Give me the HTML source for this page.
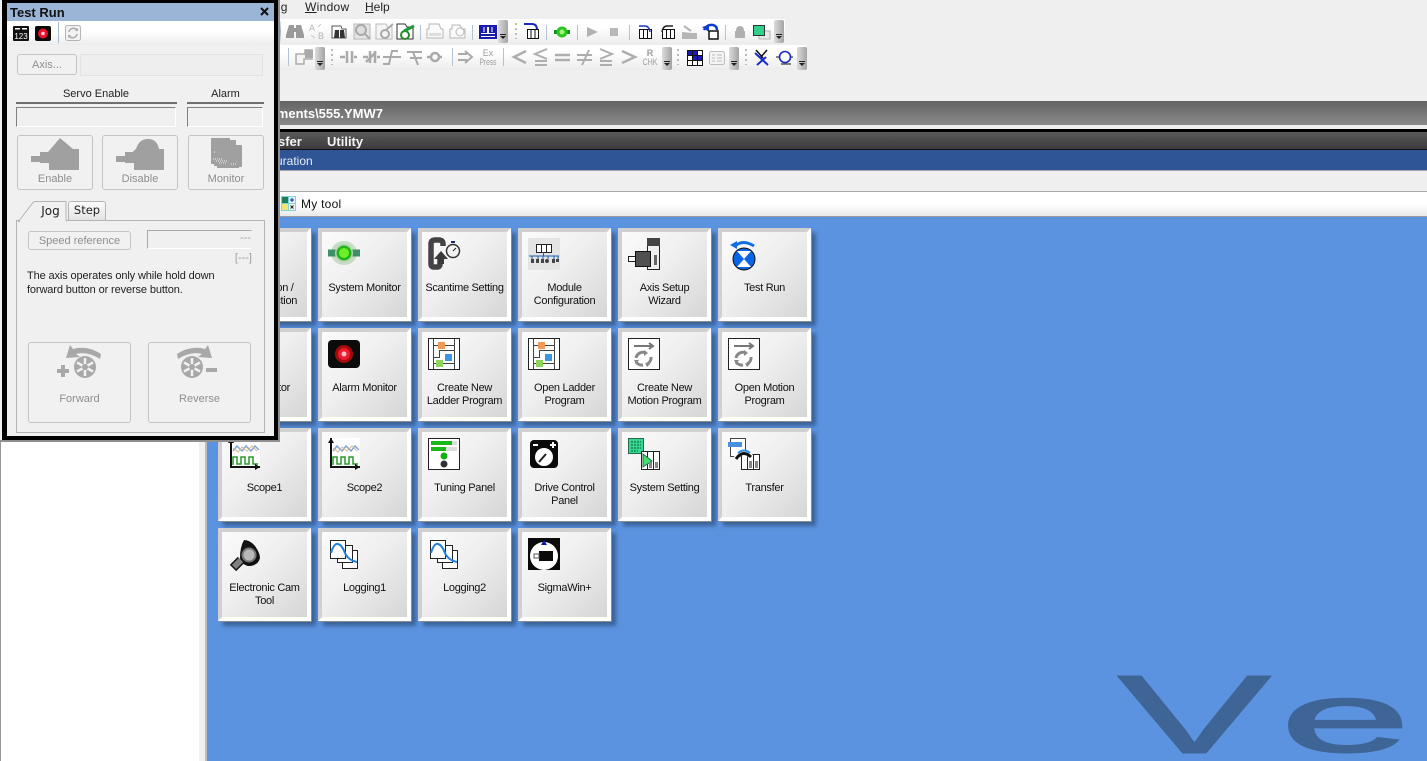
<!DOCTYPE html>
<html><head><meta charset="utf-8"><style>
html,body{margin:0;padding:0;width:1427px;height:761px;overflow:hidden;background:#efefef;font-family:"Liberation Sans",sans-serif;}
.a{position:absolute;}
svg{position:absolute;overflow:visible;}
.t{position:absolute;width:93px;height:93px;box-sizing:border-box;border:4px solid;border-color:#d0d0d0 #fff #fff #d0d0d0;background:linear-gradient(135deg,#fbfbfb 0%,#efefef 45%,#d6d6d6 100%);box-shadow:1px 1px 0 #8a8a8a,5px 5px 4px #3a6298;}
.t svg{left:6px;top:6px;}
.t div{position:absolute;left:-4px;width:93px;top:50px;text-align:center;font-size:11px;letter-spacing:-.3px;line-height:13px;color:#111;}
.m{position:absolute;font-size:12px;color:#222;top:0;line-height:14px;}
.b{position:absolute;box-sizing:border-box;border:1px solid #c4c4c4;border-radius:3px;background:#f1f1f1;color:#8e8e8e;text-align:center;font-size:11px;}
.s{position:absolute;width:1px;background:linear-gradient(#dfe7ee,#9db4c8,#dfe7ee);}
.dd{position:absolute;width:10px;height:23px;background:linear-gradient(90deg,#dcdcdc,#a3a3a3);border-radius:2px;}
.dd:after{content:"";position:absolute;left:2px;top:14px;width:6px;height:1px;background:#222;}
.dd:before{content:"";position:absolute;left:2px;top:16px;border:3px solid transparent;border-top:3px solid #222;}
.dots{position:absolute;width:2px;height:16px;background:repeating-linear-gradient(#bbb 0 2px,transparent 2px 5px);}
</style></head><body>

<!-- menu -->
<div class="m" style="left:252px">Debug</div>
<div class="m" style="left:305px;letter-spacing:.3px"><u>W</u>indow</div>
<div class="m" style="left:365px"><u>H</u>elp</div>

<!-- toolbars -->
<div class="a" style="left:278px;top:19px;width:507px;height:25px;background:linear-gradient(#fff,#fff 30%,#ececec)"></div>
<div class="a" style="left:278px;top:45px;width:528px;height:25px;background:linear-gradient(#fff,#fff 30%,#ececec)"></div>

<div class="s" style="left:280px;top:21px;height:21px"></div>
<svg style="left:278px;top:19px" width="507" height="25" viewBox="0 0 507 25">
<path d="M11 6h5v3h2V6h5l3 10v3h-8v-6h-2v6H8v-3z" fill="#9a9a9a"/>
<text x="31" y="12" font-size="9" fill="#b5b5b5" font-family="Liberation Sans">A</text>
<text x="40" y="20" font-size="9" fill="#b5b5b5" font-family="Liberation Sans">B</text>
<path d="M33 16l4 3M43 5l-3 3" stroke="#c5c5c5" fill="none"/>
<path d="M54 7h9l1 3h4v9H54z" fill="#fff" stroke="#555"/>
<path d="M57 11h4v8h-5zM62 11h4l1 8h-5z" fill="#333"/>
<rect x="76" y="5" width="16" height="15" fill="#e6e6e6" stroke="#b8b8b8"/><circle cx="83" cy="11" r="5" fill="#ddd" stroke="#aaa" stroke-width="2"/><path d="M87 15l5 5" stroke="#aaa" stroke-width="2"/>
<path d="M98 5h10l2 3h4v12H98z" fill="#f4f4f4" stroke="#bbb"/><circle cx="107" cy="15" r="4" fill="none" stroke="#aaa" stroke-width="2"/><path d="M108 11l7-6" stroke="#aaa" stroke-width="2"/>
<path d="M119 5h8l2 3h6v12h-16z" fill="#fff" stroke="#333"/><circle cx="127" cy="16" r="4" fill="none" stroke="#2a8a2a" stroke-width="2"/><path d="M126 12l10-5" stroke="#1d9a3d" stroke-width="3"/>
<rect x="142" y="6" width="1" height="15" fill="#b2c4d4"/>
<path d="M151 5h10l2 5h2v9h-16v-9h2z" fill="#fafafa" stroke="#b7b7b7"/><rect x="151" y="14" width="12" height="3" fill="#ddd"/>
<path d="M174 6h8l2 4h3v9h-15v-9h2z" fill="#fafafa" stroke="#b7b7b7"/><circle cx="182" cy="13" r="4" fill="none" stroke="#bbb"/>
<rect x="194" y="6" width="1" height="15" fill="#b2c4d4"/>
<rect x="202" y="7" width="16" height="12" fill="#fff" stroke="#1a1aa8" stroke-width="2"/><rect x="203" y="7" width="6" height="7" fill="#1a1ab5"/><rect x="211" y="7" width="6" height="7" fill="#1a1ab5"/><path d="M206 8v5M214 8v5" stroke="#fff"/><path d="M202 16h16" stroke="#1a1aa8" stroke-width="2"/>
<path d="M246 5h8q5 0 5 6" fill="none" stroke="#1a2ac0" stroke-width="2"/>
<path d="M249.500 10.500h11v9h-11zM253 10.500v9M257 10.500v9" fill="#fff" stroke="#111"/>
<rect x="268" y="6" width="1" height="15" fill="#b2c4d4"/>
<rect x="276" y="11" width="16" height="4" fill="#0f8f20"/><circle cx="284" cy="13" r="5.500" fill="#26c81e"/><circle cx="284" cy="13" r="2.500" fill="#a8ef7e"/>
<rect x="299" y="6" width="1" height="15" fill="#b2c4d4"/>
<path d="M309 8l11 5-11 5z" fill="#b2b2b2"/>
<rect x="332" y="9" width="8" height="8" fill="#b8b8b8"/>
<rect x="351" y="6" width="1" height="15" fill="#b2c4d4"/>
<path d="M361.500 10.500h12v9h-12zM365.500 10.500v9M369.500 10.500v9" fill="#fff" stroke="#111"/><path d="M361 7h6q4 0 5 6" fill="none" stroke="#1a3ac0" stroke-width="1.500"/>
<path d="M384.500 10.500h12v9h-12zM388.500 10.500v9M392.500 10.500v9" fill="#fff" stroke="#111"/><path d="M395 7h-6q-4 0-5 6" fill="none" stroke="#222" stroke-width="1.500"/>
<path d="M404 13l10 1h5v6h-15z" fill="#b5b5b5"/><path d="M406 7l7 5" stroke="#b5b5b5" stroke-width="2"/>
<path d="M426 11q3-6 9-5 4 1 4 5" fill="none" stroke="#0a3ad0" stroke-width="2.500"/><path d="M424 8l7-2v7z" fill="#0a3ad0"/>
<path d="M431 12h9v8h-9z" fill="#fff" stroke="#111" stroke-width="1.500"/>
<rect x="447" y="6" width="1" height="15" fill="#b2c4d4"/>
<path d="M458 12q0-5 4-5t4 5h1v7h-10v-7z" fill="#b0b0b0"/>
<path d="M481 12h11v8h-11z" fill="#e8e8e8" stroke="#b5b5b5"/><rect x="475.500" y="6.500" width="11" height="10" fill="#2fd08a" stroke="#333"/>
</svg>
<div class="dd" style="left:498px;top:20px"></div>
<div class="dots" style="left:515px;top:23px"></div>
<div class="dd" style="left:774px;top:20px"></div>

<svg style="left:278px;top:45px" width="528" height="25" viewBox="0 0 528 25" fill="none">
<rect x="10" y="3" width="1" height="18" fill="#b2c4d4"/>
<path d="M18 9h9V5h7v9h-8v5H18z" stroke="#ababab" stroke-width="1.500" fill="#f4f4f4"/><rect x="27" y="5" width="8" height="8" fill="#aaa"/>
<g stroke="#aaa" stroke-width="3">
<path d="M62 12h5M69 6v12M74 6v12M76 12h3" stroke-width="2.500"/>
<path d="M85 12h5M92 6v12M97 6v12M99 12h3M88 17l10-10" stroke-width="2.500"/>
<path d="M105 12h18M105 19h6l3-13h6" stroke-width="2"/>
<path d="M129 7h15M132 13h12M135 7l5 13" stroke-width="2"/>
<circle cx="157" cy="12" r="4" stroke-width="2.500"/><path d="M149 12h4M161 12h3" stroke-width="2.500"/>
<path d="M180 9h9M180 15h9M187 6l7 6-7 6" stroke-width="2"/>
</g>
<rect x="174" y="3" width="1" height="18" fill="#b2c4d4"/>
<text x="210" y="11" text-anchor="middle" font-size="9" fill="#9c9c9c" font-family="Liberation Sans">Ex</text>
<text x="210" y="20" text-anchor="middle" font-size="9" fill="#9c9c9c" font-family="Liberation Sans" textLength="17" lengthAdjust="spacingAndGlyphs">Press</text>
<rect x="225" y="3" width="1" height="18" fill="#b2c4d4"/>
<g stroke="#aeaeae" stroke-width="2.500">
<path d="M248 6l-12 6 12 6"/>
<path d="M269 4l-12 5 12 5M257 16h12M257 20h12" stroke-width="2"/>
<path d="M277 10h15M277 15h15"/>
<path d="M299 10h15M299 15h15M311 5l-7 15" stroke-width="2"/>
<path d="M322 4l12 5-12 5M322 16h12M322 20h12" stroke-width="2"/>
<path d="M344 6l13 6-13 6"/>
</g>
<text x="372" y="11" text-anchor="middle" font-size="9" font-weight="bold" fill="#9c9c9c" font-family="Liberation Sans">R</text>
<text x="372" y="20" text-anchor="middle" font-size="9" fill="#9c9c9c" font-family="Liberation Sans" textLength="15" lengthAdjust="spacingAndGlyphs">CHK</text>
<rect x="409.500" y="5.500" width="15" height="15" fill="#fff"/>
<rect x="409" y="5" width="10" height="5" fill="#1a1ab5"/><rect x="414" y="10" width="10" height="5" fill="#1a1ab5"/>
<path d="M409.500 5.500h15v15h-15zM409.500 10.500h15M409.500 15.500h15M414.500 5.500v15M419.500 5.500v15" stroke="#111"/>
<rect x="431.500" y="6.500" width="15" height="13" rx="2" fill="#f4f4f4" stroke="#bcbcbc"/>
<path d="M434 10h3M439 10h5M434 13h3M439 13h5M434 16h3M439 16h5" stroke="#bcbcbc"/>
<path d="M478 5l7 8M489 5l-7 8" stroke="#111" stroke-width="1.500"/>
<path d="M477 8l13 12M479 20l9-8" stroke="#1a2ad0" stroke-width="2"/>
<path d="M498 12h4M512 12h3M503 19h10" stroke="#111"/>
<circle cx="507" cy="12" r="5.500" stroke="#1a2ac0" stroke-width="1.600"/>
</svg>
<div class="dd" style="left:315px;top:47px"></div>
<div class="dots" style="left:331px;top:49px"></div>
<div class="dd" style="left:662px;top:47px"></div>
<div class="dots" style="left:677px;top:49px"></div>
<div class="dd" style="left:729px;top:47px"></div>
<div class="dots" style="left:745px;top:49px"></div>
<div class="dd" style="left:797px;top:47px"></div>

<!-- title bar -->
<div class="a" style="left:0;top:101px;width:1427px;height:24px;background:linear-gradient(#636363,#8a8a8a)"></div>
<div class="a" style="left:278px;top:101px;width:200px;height:24px;overflow:hidden"><div style="position:absolute;right:95px;top:5px;font:bold 13px 'Liberation Sans',sans-serif;color:#fff;white-space:nowrap;">C:\Documents\555.YMW7</div></div>
<div class="a" style="left:0;top:129px;width:1427px;height:3px;background:#000"></div>
<div class="a" style="left:0;top:132px;width:1427px;height:17px;background:linear-gradient(#5a5a5a,#3b3b3b)"></div>
<div class="a" style="left:0;top:149px;width:1427px;height:1px;background:#111"></div>
<div class="a" style="left:278px;top:134px;font:bold 13px 'Liberation Sans',sans-serif;color:#f4f4f4">sfer</div>
<div class="a" style="left:327px;top:134px;font:bold 13px 'Liberation Sans',sans-serif;color:#f4f4f4">Utility</div>
<div class="a" style="left:0;top:150px;width:1427px;height:20px;background:#2f5597"></div>
<div class="a" style="left:276px;top:154px;font-size:12px;color:#e8eef8">uration</div>
<div class="a" style="left:0;top:170px;width:1427px;height:1px;background:#a8a8a8"></div>
<div class="a" style="left:0;top:191px;width:1427px;height:1px;background:#a8a8a8"></div>
<div class="a" style="left:0;top:192px;width:1427px;height:24px;background:linear-gradient(#fff,#fff 50%,#eaeaea)"></div>
<div class="a" style="left:0;top:216px;width:1427px;height:1px;background:#9a9a9a"></div>
<svg style="left:281px;top:196px" width="15" height="15" viewBox="0 0 15 15"><rect width="15" height="15" fill="#7fd6d6"/><rect x="1" y="1" width="6" height="6" fill="#1f7f5a"/><rect x="8" y="1" width="6" height="6" fill="#e8f2ff"/><path d="M9 4h4M11 2v4" stroke="#0a2a90"/><rect x="1" y="8" width="6" height="6" fill="#f0e87a"/><rect x="8" y="8" width="6" height="6" fill="#f4f4f4"/><path d="M9.500 9.500l3 3M12.500 9.500l-3 3" stroke="#222"/></svg>
<div class="a" style="left:301px;top:197px;font:12px 'Liberation Sans',sans-serif;letter-spacing:.25px;color:#111">My tool</div>

<!-- left pane + workspace -->
<div class="a" style="left:0;top:217px;width:207px;height:544px;background:#fff"></div>
<div class="a" style="left:0;top:217px;width:1px;height:544px;background:#999"></div>
<div class="a" style="left:199px;top:217px;width:6px;height:544px;background:#f0f0f0"></div>
<div class="a" style="left:205px;top:217px;width:2px;height:544px;background:#bdbdbd"></div>
<div class="a" style="left:207px;top:217px;width:1220px;height:544px;background:#5c93e0;overflow:hidden"></div>
<svg style="left:0;top:0" width="1427" height="761"><text transform="translate(1117 753) scale(2.07 1)" font-size="112" font-family="Liberation Sans" fill="#3f6597" stroke="#3f6597" stroke-width="1">V</text><text transform="translate(1280.500 751.500) scale(2.38 1)" font-size="98" font-family="Liberation Sans" fill="#3f6597" stroke="#3f6597" stroke-width="2">e</text></svg>

<!-- tiles row 1 -->
<div class="t" style="left:218px;top:228px"><div>Connection /<br>Disconnection</div></div>
<div class="t" style="left:318px;top:228px"><svg width="32" height="32" viewBox="0 0 32 32"><ellipse cx="16" cy="15" rx="13" ry="12" fill="#c6dcc4"/><rect y="11.500" width="32" height="7" fill="#3f9066"/><circle cx="16" cy="15" r="9" fill="#b7d4b0"/><circle cx="16" cy="15" r="7.500" fill="#1fb51b"/><circle cx="16" cy="15" r="5" fill="#6fee2a"/></svg><div>System Monitor</div></div>
<div class="t" style="left:418px;top:228px"><svg width="32" height="32" viewBox="0 0 32 32"><path d="M15 8V6q0-4-4-4H7Q3 2 3 6v20q0 3 3 3h3q3 0 3-3v-7" fill="none" stroke="#444" stroke-width="5.500"/><path d="M6 21l7-8 7 8h-4v5h-6v-5z" fill="#3a3a3a"/><circle cx="25" cy="13" r="6.500" fill="#f2f2f2" stroke="#333" stroke-width="1.500"/><path d="M25 13l3-3" stroke="#222"/><rect x="23" y="3" width="4" height="2" fill="#1a2a6a"/></svg><div>Scantime Setting</div></div>
<div class="t" style="left:518px;top:228px"><svg width="32" height="32" viewBox="0 0 32 32"><rect width="32" height="32" fill="#e4e4e4"/><rect x="8.500" y="6.500" width="15" height="8" fill="#fff" stroke="#222"/><path d="M13.500 6v8M18.500 6v8" stroke="#222"/><path d="M15.500 14v4M1 18h30" stroke="#1a5fb0"/><path d="M4 18v3M10 18v3M15 18v3M20 18v3M26 18v3M30 18v3" stroke="#1a5fb0"/><g fill="#444"><rect x="3" y="21" width="3" height="4"/><rect x="8" y="21" width="3" height="4"/><rect x="13" y="21" width="3" height="4"/><circle cx="19" cy="23" r="2"/><rect x="24" y="21" width="3" height="4"/><rect x="28" y="21" width="3" height="3"/></g></svg><div>Module<br>Configuration</div></div>
<div class="t" style="left:618px;top:228px"><svg width="32" height="32" viewBox="0 0 32 32"><rect x="19.500" y=".5" width="12" height="31" fill="#efefef" stroke="#222"/><rect x="19" y="0" width="13" height="8" fill="#444"/><rect x="26" y="17" width="3" height="10" fill="#666"/><rect x=".5" y="18.500" width="8" height="5" fill="#fff" stroke="#222"/><rect x="7.500" y="13.500" width="15" height="15" fill="#505050" stroke="#111"/></svg><div>Axis Setup<br>Wizard</div></div>
<div class="t" style="left:718px;top:228px"><svg width="32" height="32" viewBox="0 0 32 32"><path d="M7 8q8-7 19 0" fill="none" stroke="#0f6fe0" stroke-width="3"/><path d="M2 7l7-4 0 8z" fill="#0f6fe0"/><circle cx="16" cy="21" r="11" fill="#0a64e8" stroke="#111"/><path d="M9 13l14 16H9l14-16z" fill="#fff"/></svg><div>Test Run</div></div>

<!-- row 2 -->
<div class="t" style="left:218px;top:328px"><div>I/O Monitor</div></div>
<div class="t" style="left:318px;top:328px"><svg width="32" height="32" viewBox="0 0 32 32"><rect y="2" width="32" height="28" rx="4" fill="#0b0b0b"/><circle cx="16" cy="16" r="9" fill="#a00c0c"/><circle cx="16" cy="16" r="6" fill="#ee1c2c"/><circle cx="16" cy="16" r="2.500" fill="#ffc0c8"/></svg><div>Alarm Monitor</div></div>
<div class="t" style="left:418px;top:328px"><svg width="32" height="32" viewBox="0 0 32 32"><rect x=".5" y=".5" width="31" height="31" fill="#fff" stroke="#222"/><path d="M5.500 1v30M26.500 1v30M5.500 7.500h21M5.500 19.500h6v-7h15M5.500 25.500h21" fill="none" stroke="#444"/><rect x="10" y="4" width="7" height="7" fill="#f29a55"/><rect x="17" y="16" width="7" height="7" fill="#3c96e8"/><rect x="8" y="22" width="7" height="7" fill="#8cd45c"/></svg><div>Create New<br>Ladder Program</div></div>
<div class="t" style="left:518px;top:328px"><svg width="32" height="32" viewBox="0 0 32 32"><rect x=".5" y=".5" width="31" height="31" fill="#fff" stroke="#222"/><path d="M5.500 1v30M26.500 1v30M5.500 7.500h21M5.500 19.500h6v-7h15M5.500 25.500h21" fill="none" stroke="#444"/><rect x="10" y="4" width="7" height="7" fill="#f29a55"/><rect x="17" y="16" width="7" height="7" fill="#3c96e8"/><rect x="8" y="22" width="7" height="7" fill="#8cd45c"/></svg><div>Open Ladder<br>Program</div></div>
<div class="t" style="left:618px;top:328px"><svg width="32" height="32" viewBox="0 0 32 32"><rect x=".5" y=".5" width="31" height="31" fill="#fff" stroke="#222"/><path d="M6 8h19M21 5l4 3-4 3" fill="none" stroke="#777" stroke-width="2"/><path d="M8 20a7 7 0 0 1 10-5M23 19a7 7 0 0 1-4 7M15 27a7 7 0 0 1-7-3" fill="none" stroke="#888" stroke-width="3"/><path d="M16 12l4 3-4 3zM17 25l5 1-3 3zM6 22l5 0-3 4z" fill="#888"/></svg><div>Create New<br>Motion Program</div></div>
<div class="t" style="left:718px;top:328px"><svg width="32" height="32" viewBox="0 0 32 32"><rect x=".5" y=".5" width="31" height="31" fill="#fff" stroke="#222"/><path d="M6 8h19M21 5l4 3-4 3" fill="none" stroke="#777" stroke-width="2"/><path d="M8 20a7 7 0 0 1 10-5M23 19a7 7 0 0 1-4 7M15 27a7 7 0 0 1-7-3" fill="none" stroke="#888" stroke-width="3"/><path d="M16 12l4 3-4 3zM17 25l5 1-3 3zM6 22l5 0-3 4z" fill="#888"/></svg><div>Open Motion<br>Program</div></div>

<!-- row 3 -->
<div class="t" style="left:218px;top:428px"><svg width="32" height="32" viewBox="0 0 32 32"><rect x="2" y="0" width="30" height="30" fill="#fff"/><path d="M5 13l4-5 5 5 4-5 5 5 4-5 4 4" fill="none" stroke="#7ea6d8" stroke-width="1.500"/><path d="M5 10l5 4 4-5 5 4 5-5 5 5" fill="none" stroke="#d8b890"/><path d="M5 27v-8h4v7h4v-7h4v7h4v-7h4v7h5" fill="none" stroke="#2a9a2a" stroke-width="1.500"/><path d="M3 0v29h29" fill="none" stroke="#111" stroke-width="2"/><path d="M0 5l3-5 3 5zM27 26l5 3-5 3z" fill="#111"/></svg><div>Scope1</div></div>
<div class="t" style="left:318px;top:428px"><svg width="32" height="32" viewBox="0 0 32 32"><rect x="2" y="0" width="30" height="30" fill="#fff"/><path d="M5 13l4-5 5 5 4-5 5 5 4-5 4 4" fill="none" stroke="#7ea6d8" stroke-width="1.500"/><path d="M5 10l5 4 4-5 5 4 5-5 5 5" fill="none" stroke="#d8b890"/><path d="M5 27v-8h4v7h4v-7h4v7h4v-7h4v7h5" fill="none" stroke="#2a9a2a" stroke-width="1.500"/><path d="M3 0v29h29" fill="none" stroke="#111" stroke-width="2"/><path d="M0 5l3-5 3 5zM27 26l5 3-5 3z" fill="#111"/></svg><div>Scope2</div></div>
<div class="t" style="left:418px;top:428px"><svg width="32" height="32" viewBox="0 0 32 32"><rect x=".5" y=".5" width="31" height="31" fill="#fff" stroke="#222"/><rect x="3" y="3" width="26" height="4" fill="#ddd"/><rect x="3" y="3" width="21" height="4" fill="#18b818"/><rect x="3" y="9" width="26" height="4" fill="#ddd"/><rect x="3" y="9" width="15" height="4" fill="#18b818"/><circle cx="16" cy="18" r="3.500" fill="#10b010"/><circle cx="16" cy="26" r="3.500" fill="#333"/></svg><div>Tuning Panel</div></div>
<div class="t" style="left:518px;top:428px"><svg width="32" height="32" viewBox="0 0 32 32"><rect x="2" y="2" width="28" height="28" rx="4" fill="#0a0a0a"/><circle cx="16" cy="19" r="9" fill="#fff"/><path d="M11 24l7-8" stroke="#222" stroke-width="2"/><path d="M5 7h5M22 7h6M25 4v6" stroke="#fff" stroke-width="2"/></svg><div>Drive Control<br>Panel</div></div>
<div class="t" style="left:618px;top:428px"><svg width="32" height="32" viewBox="0 0 32 32"><rect x=".5" y=".5" width="15" height="15" fill="#35d890" stroke="#2a6a4a"/><path d="M3 4h10M3 7h10M3 10h10M3 13h7" stroke="#0f5a3a" stroke-dasharray="2 1"/><rect x="13.500" y="13.500" width="18" height="18" fill="#fff" stroke="#222"/><path d="M19.500 13v18M25.500 13v18" stroke="#222"/><path d="M15 16l9 7-9 6z" fill="#40e070" stroke="#2a6a4a"/><rect x="21" y="24" width="3" height="6" fill="#888"/><rect x="27" y="24" width="3" height="6" fill="#888"/></svg><div>System Setting</div></div>
<div class="t" style="left:718px;top:428px"><svg width="32" height="32" viewBox="0 0 32 32"><rect x="2.500" y=".5" width="15" height="18" fill="#fff" stroke="#444"/><rect x="0" y="4" width="14" height="5" fill="#4a90e0"/><rect x="13.500" y="16.500" width="18" height="15" fill="#fff" stroke="#222"/><path d="M19.500 16v15M25.500 16v15" stroke="#222"/><rect x="21" y="23" width="3" height="7" fill="#888"/><rect x="27" y="23" width="3" height="7" fill="#888"/><path d="M8 20q7-10 15-2" fill="none" stroke="#fff" stroke-width="5"/><path d="M8 21q7-10 15-2" fill="none" stroke="#111" stroke-width="3"/><path d="M10 15q6-5 12 0" fill="none" stroke="#2a8ae8" stroke-width="2"/></svg><div>Transfer</div></div>

<!-- row 4 -->
<div class="t" style="left:218px;top:528px"><svg width="32" height="32" viewBox="0 0 32 32"><path d="M16 2Q22 2 27 8Q32 15 32 20Q30 28 20 28Q13 26 12 20Q12 9 16 2z" fill="#111"/><path d="M5 30L13 22" stroke="#111" stroke-width="9"/><path d="M6 29L13 22" stroke="#808080" stroke-width="6"/><circle cx="21" cy="17" r="6.500" fill="#b8b8b8" stroke="#777" stroke-width="2"/></svg><div>Electronic Cam<br>Tool</div></div>
<div class="t" style="left:318px;top:528px"><svg width="32" height="32" viewBox="0 0 32 32"><g fill="#fff" stroke="#222"><rect x="14.500" y="12.500" width="15" height="18"/><rect x="9.500" y="7.500" width="15" height="17"/><rect x="2.500" y="2.500" width="15" height="18"/></g><path d="M3 15Q6 5 10 6Q14 7 17 15Q20 22 29 24" fill="none" stroke="#2080e0" stroke-width="2"/></svg><div>Logging1</div></div>
<div class="t" style="left:418px;top:528px"><svg width="32" height="32" viewBox="0 0 32 32"><g fill="#fff" stroke="#222"><rect x="14.500" y="12.500" width="15" height="18"/><rect x="9.500" y="7.500" width="15" height="17"/><rect x="2.500" y="2.500" width="15" height="18"/></g><path d="M3 15Q6 5 10 6Q14 7 17 15Q20 22 29 24" fill="none" stroke="#2080e0" stroke-width="2"/></svg><div>Logging2</div></div>
<div class="t" style="left:518px;top:528px"><svg width="32" height="32" viewBox="0 0 32 32"><rect width="32" height="32" fill="#0a0a0a"/><circle cx="16" cy="18" r="14" fill="#fff"/><rect x="11" y="13" width="14" height="10" fill="#0a0a0a"/><rect x="6" y="16" width="5" height="4" fill="#fff" stroke="#555"/><path d="M16 2l3 5h-6z" fill="#0a1aa8"/></svg><div>SigmaWin+</div></div>

<!-- Test Run panel -->
<div class="a" style="left:0;top:0;width:2px;height:440px;background:#f0f0f0"></div>
<div class="a" style="left:278px;top:0;width:2px;height:442px;background:#8f8f8f"></div>
<div class="a" style="left:0;top:440px;width:280px;height:2px;background:#8f8f8f"></div>
<div class="a" style="left:2px;top:0;width:276px;height:440px;background:#000"></div>
<div class="a" style="left:7px;top:3px;width:267px;height:433px;background:#f0f0f0"></div>
<div class="a" style="left:7px;top:3px;width:267px;height:18px;background:#9ab5d5"></div>
<div class="a" style="left:10px;top:5px;font:bold 13px 'Liberation Sans',sans-serif;color:#111">Test Run</div>
<svg style="left:260px;top:7px" width="9" height="9" viewBox="0 0 9 9"><path d="M1 1l7 7M8 1l-7 7" stroke="#111" stroke-width="2"/></svg>
<div class="a" style="left:7px;top:21px;width:267px;height:24px;background:linear-gradient(#fff,#fff 45%,#ececec)"></div>
<svg style="left:13px;top:26px" width="16" height="15" viewBox="0 0 16 15"><rect width="16" height="15" rx="1" fill="#111"/><rect x="2" y="2" width="5" height="1.500" fill="#fff"/><rect x="9" y="2" width="5" height="1.500" fill="#fff"/><text x="8" y="13" text-anchor="middle" font-size="8" fill="#fff" font-family="Liberation Sans">123</text></svg>
<svg style="left:35px;top:26px" width="16" height="15" viewBox="0 0 16 15"><rect width="16" height="15" rx="2" fill="#0a0a0a"/><circle cx="8" cy="7.500" r="5" fill="#e8102a"/><circle cx="8" cy="7.500" r="1.800" fill="#ffd0d8"/></svg>
<div class="a" style="left:58px;top:22px;width:1px;height:21px;background:#a8bdd0"></div>
<svg style="left:65px;top:25px" width="16" height="16" viewBox="0 0 16 16"><rect x=".5" y=".5" width="15" height="15" rx="2" fill="#f2f2f2" stroke="#b5b5b5"/><path d="M4 7a4.500 4.500 0 0 1 8-2M12 9a4.500 4.500 0 0 1-8 2" fill="none" stroke="#aaa" stroke-width="1.500"/><path d="M10 6h3V3zM6 10H3v3z" fill="#aaa"/></svg>

<div class="b" style="left:17px;top:54px;width:60px;height:21px;line-height:21px">Axis...</div>
<div class="a" style="left:80px;top:54px;width:183px;height:22px;box-sizing:border-box;border:1px solid #e2e2e2;background:#eeeeee"></div>
<div class="a" style="left:16px;top:88px;width:160px;text-align:center;font-size:11px;color:#222">Servo Enable</div>
<div class="a" style="left:187px;top:88px;width:77px;text-align:center;font-size:11px;color:#222">Alarm</div>
<div class="a" style="left:16px;top:102px;width:161px;height:2px;background:#6f6f6f"></div>
<div class="a" style="left:187px;top:102px;width:77px;height:2px;background:#6f6f6f"></div>
<div class="a" style="left:16px;top:107px;width:160px;height:20px;box-sizing:border-box;border:1px solid;border-color:#808080 #fff #fff #808080;background:#f0f0f0"></div>
<div class="a" style="left:187px;top:107px;width:76px;height:20px;box-sizing:border-box;border:1px solid;border-color:#808080 #fff #fff #808080;background:#f0f0f0"></div>

<div class="b" style="left:17px;top:135px;width:76px;height:55px;line-height:87px">Enable</div>
<div class="b" style="left:102px;top:135px;width:76px;height:55px;line-height:87px">Disable</div>
<div class="b" style="left:188px;top:135px;width:76px;height:55px;line-height:87px">Monitor</div>
<svg style="left:31px;top:138px" width="50" height="33" viewBox="0 0 50 33"><path d="M0 18h9v-4h8L29 0l13 11h6v21H18v-7H9v-1H0z" fill="#a0a0a0"/></svg>
<svg style="left:116px;top:138px" width="50" height="33" viewBox="0 0 50 33"><path d="M0 18h9v-4h8q1-2 3-3 3-10 12-10 9 0 11 10h5v21H18v-7H9v-1H0z" fill="#a0a0a0"/></svg>
<svg style="left:211px;top:138px" width="32" height="31" viewBox="0 0 32 31"><path d="M0 0h19v2h6v5h6v22h-3v1H6v-2H3v-2H0z" fill="#a0a0a0"/><path d="M3 14h1M2 21h10M5 23h12M8 25h8M20 26h6" stroke="#f0f0f0" stroke-dasharray="1 1"/></svg>

<div class="a" style="left:16px;top:220px;width:249px;height:213px;box-sizing:border-box;border:1px solid #b4b4b4;background:#f0f0f0"></div>
<div class="a" style="left:68px;top:201px;width:38px;height:19px;box-sizing:border-box;border:1px solid #b4b4b4;border-bottom:0;border-radius:3px 3px 0 0;background:linear-gradient(#fbfbfb,#e4e4e4);text-align:center;font:11.5px/17px 'DejaVu Sans',sans-serif;color:#222">Step</div>
<svg style="left:18px;top:201px" width="50" height="21" viewBox="0 0 50 21"><path d="M.5 20.500L15 1.500q1-1 2-1h31V20.500z" fill="#f0f0f0" stroke="#b4b4b4"/><rect x="2" y="19.500" width="46" height="2" fill="#f0f0f0"/></svg>
<div class="a" style="left:37px;top:203px;font:12px/17px 'DejaVu Sans',sans-serif;color:#222;width:27px;text-align:center">Jog</div>

<div class="b" style="left:28px;top:231px;width:103px;height:19px;line-height:19px">Speed reference</div>
<div class="a" style="left:147px;top:230px;width:105px;height:19px;box-sizing:border-box;border:1px solid;border-color:#a9a9a9 #f0f0f0 #fff #a9a9a9;background:#f0f0f0;text-align:right;font-size:11px;line-height:15px;color:#a4a4a4">---</div>
<div class="a" style="left:200px;top:252px;width:52px;text-align:right;font-size:11px;color:#a0a0a0">[---]</div>
<div class="a" style="left:27px;top:269px;font-size:11px;letter-spacing:-.12px;line-height:14px;color:#222;white-space:nowrap">The axis operates only while hold down<br>forward button or reverse button.</div>

<div class="b" style="left:28px;top:342px;width:103px;height:81px;line-height:113px">Forward</div>
<div class="b" style="left:148px;top:342px;width:103px;height:81px;line-height:113px">Reverse</div>
<svg style="left:57px;top:345px" width="45" height="34" viewBox="0 0 45 34"><path d="M44 9Q30 0 16 4L13 0 9 13 23 12 19 9Q30 6 43 14z" fill="#a8a8a8"/><circle cx="28" cy="22" r="11" fill="#a8a8a8"/><path d="M28 13v18M20 17.500l16 9M20 26.500l16-9" stroke="#f1f1f1" stroke-width="2.500"/><circle cx="28" cy="22" r="3" fill="#a8a8a8"/><path d="M0 24h12v4H0zM4 20h4v12H4z" fill="#a8a8a8"/></svg>
<svg style="left:176px;top:345px" width="45" height="34" viewBox="0 0 45 34"><path d="M1 9Q15 0 29 4L32 0 36 13 22 12 26 9Q15 6 2 14z" fill="#a8a8a8"/><circle cx="16" cy="22" r="11" fill="#a8a8a8"/><path d="M16 13v18M8 17.500l16 9M8 26.500l16-9" stroke="#f1f1f1" stroke-width="2.500"/><circle cx="16" cy="22" r="3" fill="#a8a8a8"/><rect x="30" y="23" width="11" height="4" fill="#a8a8a8"/></svg>

</body></html>
